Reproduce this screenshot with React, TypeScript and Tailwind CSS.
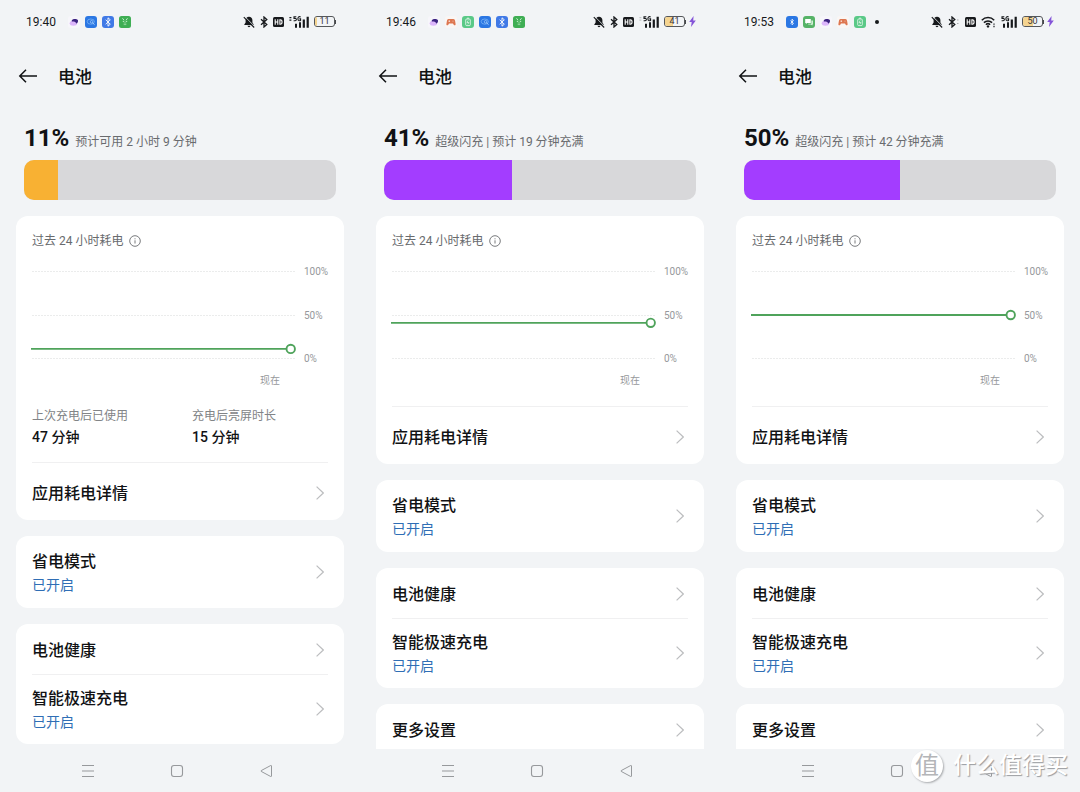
import type { ReactNode } from "react";

type AppIcon = "pebble" | "gamepad" | "charge" | "browser" | "bluetooth" | "bluetoothSmall" | "robot" | "chat";

type Phone = {
  time: string;
  apps: AppIcon[];
  more?: boolean;
  wifi?: boolean;
  traffic?: "active" | "idle";
  level: number;
  charging: boolean;
  estimate: string;
  stats?: { label: string; value: string }[];
  moreSettings?: boolean;
};

const phones: Phone[] = [
  {
    time: "19:40",
    apps: ["pebble", "browser", "bluetooth", "robot"],
    traffic: "active",
    level: 11,
    charging: false,
    estimate: "预计可用 2 小时 9 分钟",
    stats: [
      { label: "上次充电后已使用", value: "47 分钟" },
      { label: "充电后亮屏时长", value: "15 分钟" },
    ],
  },
  {
    time: "19:46",
    apps: ["pebble", "gamepad", "charge", "browser", "bluetooth", "robot"],
    traffic: "idle",
    level: 41,
    charging: true,
    estimate: "超级闪充 | 预计 19 分钟充满",
    moreSettings: true,
  },
  {
    time: "19:53",
    apps: ["bluetoothSmall", "chat", "pebble", "gamepad", "charge"],
    more: true,
    wifi: true,
    level: 50,
    charging: true,
    estimate: "超级闪充 | 预计 42 分钟充满",
    moreSettings: true,
  },
];

const appArt: Record<AppIcon, ReactNode> = {
  pebble: (
    <>
      <rect width="12" height="12" rx="3" fill="#f7f6fb" />
      <ellipse cx="5.4" cy="7.2" rx="3.700" ry="2.500" fill="#dcb6fb" />
      <path d="M3.800 4.200C5 2.600 9.700 2.600 10 4.600c.2 1.600-.6 2.800-1.800 3C8.200 6 6 5.400 3.800 5.600Z" fill="#3b2280" />
    </>
  ),
  gamepad: (
    <>
      <rect width="12" height="12" rx="3" fill="#faf6f4" />
      <path d="M3.600 3h4.800c1 0 1.500.8 1.700 2l.5 3c.2 1.400-1.200 1.700-1.900.7L8 7.600H4l-.7 1.100c-.7 1-2.100.7-1.900-.7l.5-3c.2-1.200.7-2 1.700-2Z" fill="#dd7650" />
      <path d="M3.500 5.200h1.600M4.300 4.400V6M7.600 5.200h.8" stroke="#fff" strokeWidth=".6" />
    </>
  ),
  charge: (
    <>
      <rect width="12" height="12" rx="3" fill="#5ac987" />
      <rect x="3.700" y="3" width="4.600" height="6.600" rx="1" fill="none" stroke="#fff" strokeWidth=".7" />
      <path d="M5 2.200h2" stroke="#fff" strokeWidth=".7" />
      <path d="M6.200 4.400 5 6.500h1.900L5.800 8.300" fill="none" stroke="#fff" strokeWidth=".6" />
    </>
  ),
  browser: (
    <>
      <rect width="12" height="12" rx="3" fill="#2b77e3" />
      <ellipse cx="5.800" cy="5.600" rx="3.600" ry="2.600" fill="none" stroke="#8fc4fb" strokeWidth=".6" />
      <circle cx="6.600" cy="5.800" r="1.300" fill="none" stroke="#b9dcff" strokeWidth=".6" />
      <path d="m7.600 6.900 2 1.800" stroke="#b9dcff" strokeWidth=".8" />
    </>
  ),
  bluetooth: (
    <>
      <rect width="12" height="12" rx="3" fill="#4079e6" />
      <path d="m3.700 3.800 4.600 4.400L6 10.200V1.800l2.300 2L3.700 8.200" fill="none" stroke="#fff" strokeWidth=".9" />
    </>
  ),
  bluetoothSmall: (
    <>
      <rect width="12" height="12" rx="3" fill="#2b77e3" />
      <path d="m4.500 4.600 3 2.800L6 8.800V3.200l1.500 1.400-3 2.800" fill="none" stroke="#fff" strokeWidth=".8" />
    </>
  ),
  robot: (
    <>
      <rect width="12" height="12" rx="2.500" fill="#3fae54" />
      <path d="M3.500 2.300 5 4.200M8.500 2.300 7 4.200M3.800 5.400h1.400M6.800 5.400h1.400M4.800 7h.8M6.400 7h.8M4.800 8.600h.8M6.400 8.600h.8" stroke="#e4ffe9" strokeWidth=".8" />
    </>
  ),
  chat: (
    <>
      <rect width="12" height="12" rx="3" fill="#56b367" />
      <path d="M2.200 3h5.600v4H4.200L2.900 8.100V7h-.7Z" fill="#fff" />
      <path d="M8.400 4.600h1.500v3.900h-.6v1L8 8.500H5.200V7.700h3.200Z" fill="#e0f6e4" />
    </>
  ),
};

function BellOff() {
  return (
    <svg viewBox="0 0 12 12" className="h-3 w-3">
      <path d="M6 .8c2 0 3.400 1.500 3.400 3.300v2.400l1.300 2v.6H1.300v-.6l1.300-2V4.100C2.600 2.300 4 .8 6 .8ZM4.500 9.800h3c-.2.900-.8 1.400-1.500 1.400s-1.300-.5-1.500-1.400Z" fill="#17191c" />
      <path d="m1.800.6 9.700 9.700" stroke="#f2f4f6" strokeWidth=".9" />
      <path d="m.8 1.100 10.400 10.400" stroke="#17191c" strokeWidth="1.100" />
    </svg>
  );
}

function BluetoothMark({ connected }: { connected?: boolean }) {
  return (
    <svg viewBox={connected ? "0 0 12 12" : "0 0 8 12"} className={connected ? "h-3 w-3" : "h-3 w-2"} fill="none" stroke="#17191c" strokeWidth="1.300">
      <path d="m1 3.300 5.800 5.300L4 11V1l2.800 2.400L1 8.700" />
      {connected && <path d="M9 4h1.500M9 7.500h1.500" stroke="#a9abae" strokeWidth="1" />}
    </svg>
  );
}

function HdBadge() {
  return (
    <svg viewBox="0 0 11 10" className="h-[10px] w-[11px]">
      <rect width="11" height="10" rx="1.500" fill="#17191c" />
      <path d="M2.200 2.300v5.400M4.800 2.300v5.400M2.200 5h2.600M6.900 2.800v4.400h.5c2.200 0 2.200-4.400 0-4.400Z" fill="none" stroke="#fff" strokeWidth="1.100" />
    </svg>
  );
}

function Wifi() {
  return (
    <svg viewBox="0 0 15 12" className="h-3 w-[15px]" fill="none" stroke="#17191c">
      <path d="M.8 4.300c3.500-3.600 9-3.600 12.400 0M2.900 6.600c2.300-2.300 5.900-2.300 8.200 0M4.900 8.700c1.200-1.200 3-1.200 4.200 0" strokeWidth="1.500" />
      <circle cx="7" cy="10.400" r="1.200" fill="#17191c" stroke="none" />
      <path d="M13 7.400v1.400M13 9.800v1.400" strokeWidth="1.200" />
    </svg>
  );
}

function Signal({ traffic }: { traffic?: "active" | "idle" }) {
  return (
    <svg
      viewBox={traffic ? "-4 0 20 12" : "0 0 16 12"}
      className={traffic ? "h-3 w-5" : "h-3 w-4"}
      fill="none"
      stroke="#17191c"
    >
      {traffic && (
        <path d="M-3.600 1.700h2M-3.600 4.200h2" stroke={traffic === "active" ? "#17191c" : "#c4c6c9"} strokeWidth="1.300" />
      )}
      <path d="M3.300.7H1v1.700h1.300c1.500 0 1.400 2.400-.1 2.400H.6M7.600 1.100C6.600.2 4.900.7 4.900 2.700s1.800 2.600 2.700 1.600V2.900H6.300" strokeWidth="1.100" />
      <path d="M3 7.800v3.900M7 6.300v5.400" strokeWidth="2" />
      <path d="M10.800 3.400v8.300M14.700.8v10.900" strokeWidth="2.200" />
    </svg>
  );
}

function BatteryMark({ level }: { level: number }) {
  return (
    <span className="flex items-center">
      <span className="relative flex h-[11px] w-[21px] items-center justify-center overflow-hidden rounded-[3px] border border-[#55575a] text-[9px] leading-[9px] text-[#33353a]">
        <span className="absolute inset-y-0 left-0 bg-[#f5d490]" style={{ width: `${level}%` }} />
        <span className="relative">{level}</span>
      </span>
      <span className="h-1 w-px bg-[#45474a]" />
    </span>
  );
}

function StatusBar({ phone }: { phone: Phone }) {
  return (
    <div
      className={`flex h-[42px] shrink-0 items-center justify-between pt-px ${phone.more ? "pr-[26px] pl-6" : "pr-6 pl-[26px]"}`}
    >
      <div className="flex items-center">
        <span className="text-[12px] leading-4 text-[#17191c]">{phone.time}</span>
        <div className="ml-3 flex items-center gap-[5px]">
          {phone.apps.map((name) => (
            <svg key={name} viewBox="0 0 12 12" className="h-[12px] w-[12px]">
              {appArt[name]}
            </svg>
          ))}
          {phone.more && <span className="ml-1 h-1 w-1 rounded-full bg-[#17191c]" />}
        </div>
      </div>
      <div className="flex items-center gap-[5px]">
        <BellOff />
        <BluetoothMark connected={phone.wifi} />
        <HdBadge />
        {phone.wifi && <Wifi />}
        <Signal traffic={phone.traffic} />
        <BatteryMark level={phone.level} />
        {phone.charging && (
          <svg viewBox="0 0 7 11" className="-ml-0.5 h-[11px] w-[7px]">
            <path d="M4.600 0 .2 6h2.500L2 11l4.800-6.400H4.200Z" fill="#8454d8" />
          </svg>
        )}
      </div>
    </div>
  );
}

function Chevron() {
  return (
    <svg viewBox="0 0 8 14" className="mr-1 h-[14px] w-2 shrink-0" fill="none" stroke="#bcbdbf" strokeWidth="1.200">
      <path d="m.6.6 6.700 6.400-6.700 6.400" />
    </svg>
  );
}

function Row({ title, status }: { title: string; status?: string }) {
  return (
    <button
      type="button"
      className={`flex w-full items-center justify-between text-left ${status ? "h-[68px]" : "h-12"}`}
    >
      <span className="flex flex-col pt-0.5">
        <span className="text-[16px] leading-6 font-medium text-[#111214]">{title}</span>
        {status && <span className="text-[14px] leading-[22px] text-[#2f6eb5]">{status}</span>}
      </span>
      <Chevron />
    </button>
  );
}

function Card({ children }: { children: ReactNode }) {
  return <section className="shrink-0 rounded-xl bg-white px-4">{children}</section>;
}

function UsageChart({ level }: { level: number }) {
  const y = 93.5 - level * 0.87;
  return (
    <div className="mt-4">
      <div className="flex gap-2">
        <svg className="h-[100px] min-w-0 flex-1 overflow-visible" role="img" aria-label={`${level}%`}>
          {[6.5, 50.5, 93.5].map((lineY) => (
            <line key={lineY} x1="0" x2="100%" y1={lineY} y2={lineY} stroke="#ebecec" strokeDasharray="2 1" />
          ))}
          <line x1="-1" x2="98%" y1={y} y2={y} stroke="#4fa35b" strokeWidth="1.800" />
          <circle cx="98%" cy={y} r="4.200" fill="#fff" stroke="#4fa35b" strokeWidth="1.900" />
        </svg>
        <div className="flex w-6 flex-col justify-between pt-px text-[10px] leading-3 text-[#96989b]">
          <span>100%</span>
          <span>50%</span>
          <span>0%</span>
        </div>
      </div>
      <p className="mt-[10px] pr-12 text-right text-[10px] leading-3 text-[#96989b]">现在</p>
    </div>
  );
}

function PhoneScreen({ phone }: { phone: Phone }) {
  return (
    <div className="flex h-screen min-w-0 flex-col">
      <StatusBar phone={phone} />
      <header className="flex h-[68px] shrink-0 items-center gap-5 px-[18px]">
        <button type="button" aria-label="返回">
          <svg viewBox="0 0 20 14" className="h-[14px] w-5" fill="none" stroke="#111214" strokeWidth="1.500">
            <path d="M19 7H2M8 .8 1.800 7 8 13.200" />
          </svg>
        </button>
        <h1 className="pt-0.5 text-[17px] leading-6 font-medium text-[#111214]">电池</h1>
      </header>
      <main className="flex min-h-0 flex-1 flex-col overflow-hidden px-4 pt-3">
        <div className="mb-4 shrink-0 px-2">
          <div className="mb-1.5 flex items-baseline gap-1.5">
            <strong className="text-[24px] leading-8 font-bold text-[#111214]">{phone.level}%</strong>
            <span className="text-[12px] leading-4 whitespace-nowrap text-[#696b6e]">{phone.estimate}</span>
          </div>
          <div className="h-10 overflow-hidden rounded-[10px] bg-[#d8d8da]">
            <div
              className={`h-full ${phone.charging ? "bg-[#a33dff]" : "bg-[#f8b133]"}`}
              style={{ width: `${phone.level}%` }}
            />
          </div>
        </div>
        <div className="flex flex-col gap-4">
          <Card>
            <h2 className="flex items-center gap-1.5 pt-[17px] text-[12px] leading-4 text-[#696b6e]">
              过去 24 小时耗电
              <svg viewBox="0 0 12 12" className="h-3 w-3" fill="none" stroke="#696b6e" strokeWidth=".9">
                <circle cx="6" cy="6" r="5.300" />
                <path d="M6 5.300v3.200M6 3.300v1" />
              </svg>
            </h2>
            <UsageChart level={phone.level} />
            {phone.stats ? (
              <dl className="mt-[21px] grid grid-cols-[160px_1fr] pb-[15px]">
                {phone.stats.map((stat) => (
                  <div key={stat.label}>
                    <dt className="text-[12px] leading-4 text-[#828487]">{stat.label}</dt>
                    <dd className="mt-[3px] text-[14px] leading-5 font-medium text-[#111214]">{stat.value}</dd>
                  </div>
                ))}
              </dl>
            ) : (
              <div className="h-[19px]" />
            )}
            <div className="border-t border-[#f0f0f1] pt-1.5 pb-[3px]">
              <Row title="应用耗电详情" />
            </div>
          </Card>
          <Card>
            <div className="py-0.5">
              <Row title="省电模式" status="已开启" />
            </div>
          </Card>
          <Card>
            <div className="border-b border-[#f0f0f1] pt-0.5">
              <Row title="电池健康" />
            </div>
            <div className="pb-px">
              <Row title="智能极速充电" status="已开启" />
            </div>
          </Card>
          {phone.moreSettings && (
            <Card>
              <div className="pt-0.5 pb-4">
                <Row title="更多设置" />
              </div>
            </Card>
          )}
        </div>
      </main>
      <nav className="flex h-[43px] shrink-0 items-center justify-center gap-[75px] pr-[6px] text-[#97999c]">
        <button type="button" aria-label="最近任务">
          <svg viewBox="0 0 14 14" className="h-[14px] w-[14px]" stroke="currentColor">
            <path d="M1 1.500h12M1 7h12M1 12.500h12" />
          </svg>
        </button>
        <button type="button" aria-label="主屏幕">
          <svg viewBox="0 0 14 14" className="h-[14px] w-[14px]" fill="none" stroke="currentColor" strokeWidth="1.100">
            <rect x="1.500" y="1.500" width="11" height="11" rx="2.500" />
          </svg>
        </button>
        <button type="button" aria-label="返回上一级">
          <svg viewBox="0 0 14 14" className="h-[14px] w-[14px]" fill="none" stroke="currentColor" strokeLinejoin="round">
            <path d="M12.500 2v10c0 .5-.3.700-.8.500L2.200 7.400a.5.500 0 0 1 0-.8l9.500-5.100c.5-.2.800 0 .8.500Z" />
          </svg>
        </button>
      </nav>
    </div>
  );
}

export default function App() {
  return (
    <div className="relative grid grid-cols-3 overflow-hidden bg-[#f2f4f6] font-[Roboto,'Noto_Sans_CJK_SC',sans-serif]">
      {phones.map((phone) => (
        <PhoneScreen key={phone.time} phone={phone} />
      ))}
      <div className="pointer-events-none absolute right-3 bottom-2.5 flex items-center gap-2.5">
        <span className="flex h-8 w-8 items-center justify-center rounded-full bg-white text-[24px] leading-8 font-normal text-[#b4b5b8] shadow-[1px_1px_2px_#a8aaad]">
          值
        </span>
        <span className="text-[23px] leading-8 font-medium text-white [text-shadow:1px_1px_1px_#9a9ca0]">什么值得买</span>
      </div>
    </div>
  );
}
